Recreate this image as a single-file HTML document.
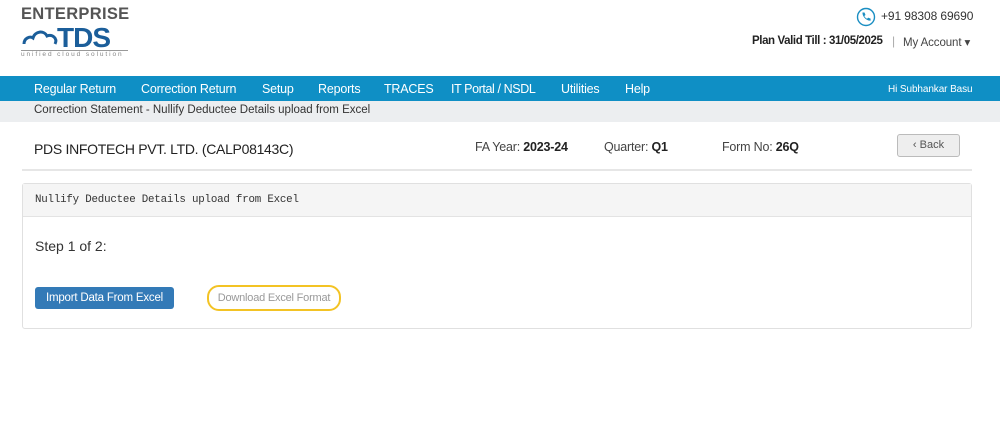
<!DOCTYPE html>
<html><head><style>
*{margin:0;padding:0;box-sizing:border-box}
body{width:1000px;height:445px;background:#fff;font-family:"Liberation Sans",sans-serif;position:relative;overflow:hidden;color:#333}
.a{position:absolute;white-space:nowrap}
.n{font-size:12.5px;color:#fff;top:82px;letter-spacing:-0.2px}
</style></head><body>
<div class="a" style="left:21px;top:5px;font-size:16.5px;font-weight:bold;color:#555;letter-spacing:0.3px">ENTERPRISE</div>
<svg class="a" style="left:22px;top:27px" width="38" height="20" viewBox="0 0 38 20"><path d="M2 17 C2 11 8 9 11 11 C13 4 22 3 25 9 C30 7 36 11 33 17" fill="none" stroke="#1b5e9a" stroke-width="3"/></svg>
<div class="a" style="left:57px;top:22px;font-size:28px;font-weight:bold;color:#1b5e9a;letter-spacing:-1px">TDS</div>
<div class="a" style="left:21px;top:50px;width:107px;border-top:1px solid #999"></div>
<div class="a" style="left:21px;top:51px;font-size:6.5px;color:#888;letter-spacing:1.9px">unified cloud solution</div>
<svg class="a" style="left:856px;top:7px" width="20" height="20" viewBox="0 0 20 20"><circle cx="10" cy="10" r="8.5" fill="none" stroke="#1a8ec2" stroke-width="1.4"/><path d="M6.5 5.5 l2 0 l1 2.5 l-1.2 1 c0.6 1.3 1.5 2.2 2.8 2.8 l1-1.2 l2.5 1 l0 2 c-4 0.5 -8.5-4-8.1-8.1z" fill="#1a8ec2"/></svg>
<div class="a" style="left:881px;top:9px;font-size:12px;color:#333;letter-spacing:-0.1px">+91 98308 69690</div>
<div class="a" style="left:752px;top:35px;font-size:11.5px;color:#222;font-weight:bold;letter-spacing:-0.4px">Plan Valid Till : 31/05/2025</div>
<div class="a" style="left:892px;top:34px;font-size:12px;color:#aaa">|</div>
<div class="a" style="left:903px;top:35px;font-size:11.5px;color:#444;letter-spacing:-0.1px">My Account ▾</div>
<div class="a" style="left:0;top:76px;width:1000px;height:25px;background:#0f8fc5"></div>
<div class="a n" style="left:34px">Regular Return</div>
<div class="a n" style="left:141px">Correction Return</div>
<div class="a n" style="left:262px">Setup</div>
<div class="a n" style="left:318px">Reports</div>
<div class="a n" style="left:384px">TRACES</div>
<div class="a n" style="left:451px;letter-spacing:-0.4px">IT Portal / NSDL</div>
<div class="a n" style="left:561px">Utilities</div>
<div class="a n" style="left:625px">Help</div>
<div class="a" style="left:888px;top:84px;font-size:10px;color:#fff;letter-spacing:-0.1px">Hi Subhankar Basu</div>
<div class="a" style="left:0;top:101px;width:1000px;height:21px;background:#eceef0"></div>
<div class="a" style="left:34px;top:104px;font-size:11.5px;color:#333;letter-spacing:0px">Correction Statement - Nullify Deductee Details upload from Excel</div>
<div class="a" style="left:34px;top:141px;font-size:14px;color:#222;letter-spacing:-0.3px">PDS INFOTECH PVT. LTD. (CALP08143C)</div>
<div class="a" style="left:475px;top:140px;font-size:12.5px;color:#444;letter-spacing:-0.2px">FA Year: <b style="color:#222">2023-24</b></div>
<div class="a" style="left:604px;top:140px;font-size:12.5px;color:#444;letter-spacing:-0.2px">Quarter: <b style="color:#222">Q1</b></div>
<div class="a" style="left:722px;top:140px;font-size:12.5px;color:#444;letter-spacing:-0.2px">Form No: <b style="color:#222">26Q</b></div>
<div class="a" style="left:897px;top:134px;width:63px;height:23px;border:1px solid #bbb;border-radius:3px;background:#eee;font-size:11px;color:#555;text-align:center;line-height:21px">‹ Back</div>
<div class="a" style="left:22px;top:169px;width:950px;height:2px;background:#e6e6e6"></div>
<div class="a" style="left:22px;top:183px;width:950px;height:146px;border:1px solid #e0e0e0;border-radius:3px"></div>
<div class="a" style="left:23px;top:184px;width:948px;height:33px;background:#f5f5f5;border-bottom:1px solid #e3e3e3"></div>
<div class="a" style="left:35px;top:194px;font-family:'Liberation Mono',monospace;font-size:10.8px;color:#333;letter-spacing:-0.2px">Nullify Deductee Details upload from Excel</div>
<div class="a" style="left:35px;top:238px;font-size:14px;color:#333">Step 1 of 2:</div>
<div class="a" style="left:35px;top:287px;width:139px;height:22px;background:#337ab7;border-radius:3px;color:#fff;font-size:11.5px;text-align:center;line-height:22px;letter-spacing:-0.2px">Import Data From Excel</div>
<div class="a" style="left:207px;top:285px;width:134px;height:26px;border:2.5px solid #f3c324;border-radius:12px;color:#999;font-size:11px;text-align:center;line-height:22px;letter-spacing:-0.2px">Download Excel Format</div>
</body></html>
